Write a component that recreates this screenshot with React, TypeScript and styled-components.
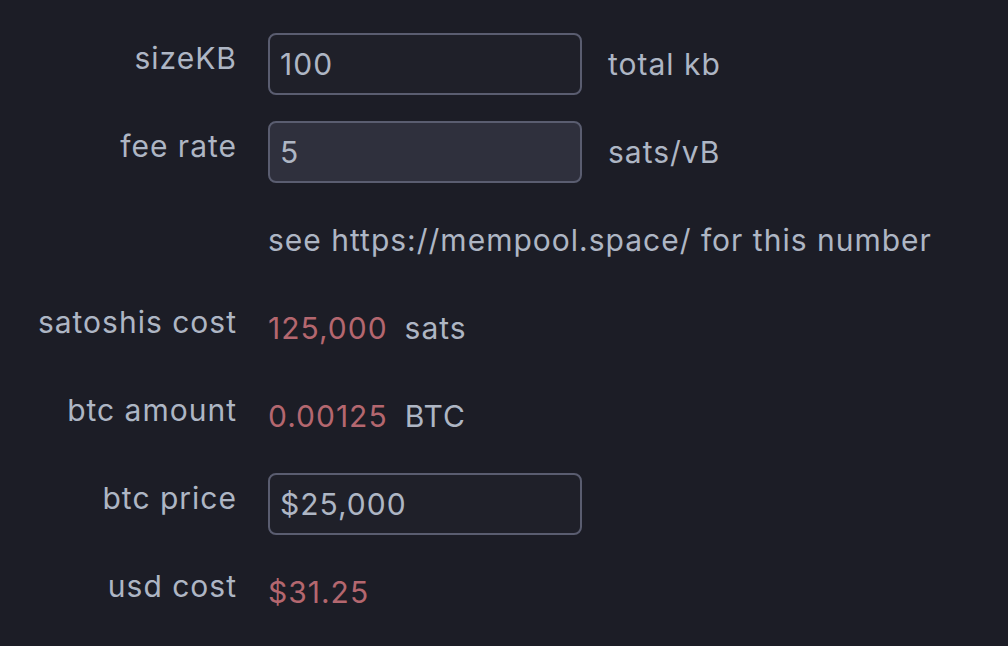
import styled, { createGlobalStyle } from 'styled-components';

const GlobalStyle = createGlobalStyle`
  html, body {
    margin: 0;
    padding: 0;
    background: #1c1d26;
  }
  body {
    font-family: Inter, "Noto Sans", sans-serif;
    color: #aeb6c4;
  }
`;

const Page = styled.main`
  width: 1008px;
  height: 646px;
  box-sizing: border-box;
  padding: 33px 0 0 30px;
  background: #1c1d26;
`;

const FormGrid = styled.div`
  display: grid;
  grid-template-columns: 207px auto;
  grid-auto-rows: 62px;
  column-gap: 31px;
  row-gap: 26px;
  font-size: 30px;
  line-height: 36px;
  letter-spacing: 1px;
`;

const Label = styled.label`
  align-self: center;
  text-align: right;
  padding-bottom: 12px;
  white-space: nowrap;
`;

const Field = styled.div`
  display: flex;
  align-items: center;
  gap: ${(props: { $gap?: number }) => props.$gap ?? 26}px;
  white-space: nowrap;
`;

const Input = styled.input<{ $hover?: boolean }>`
  width: 314px;
  height: 62px;
  box-sizing: border-box;
  padding: 0 10px;
  border: 2px solid #5a5d70;
  border-radius: 8px;
  background: ${(props) => (props.$hover ? '#2f303d' : '#1f2029')};
  color: #aeb6c4;
  font: inherit;
  letter-spacing: inherit;
  outline: none;
`;

const Value = styled.span`
  color: #b4676f;
`;

const Unit = styled.span``;

const Hint = styled.span``;

export default function App() {
  return (
    <>
      <GlobalStyle />
      <Page>
        <FormGrid>
          <Label>sizeKB</Label>
          <Field>
            <Input defaultValue="100" />
            <Unit>total kb</Unit>
          </Field>

          <Label>fee rate</Label>
          <Field>
            <Input $hover defaultValue="5" />
            <Unit>sats/vB</Unit>
          </Field>

          <Label />
          <Field>
            <Hint>see https://mempool.space/ for this number</Hint>
          </Field>

          <Label>satoshis cost</Label>
          <Field $gap={17}>
            <Value>125,000</Value>
            <Unit>sats</Unit>
          </Field>

          <Label>btc amount</Label>
          <Field $gap={17}>
            <Value>0.00125</Value>
            <Unit>BTC</Unit>
          </Field>

          <Label>btc price</Label>
          <Field>
            <Input defaultValue="$25,000" />
          </Field>

          <Label>usd cost</Label>
          <Field>
            <Value>$31.25</Value>
          </Field>
        </FormGrid>
      </Page>
    </>
  );
}
